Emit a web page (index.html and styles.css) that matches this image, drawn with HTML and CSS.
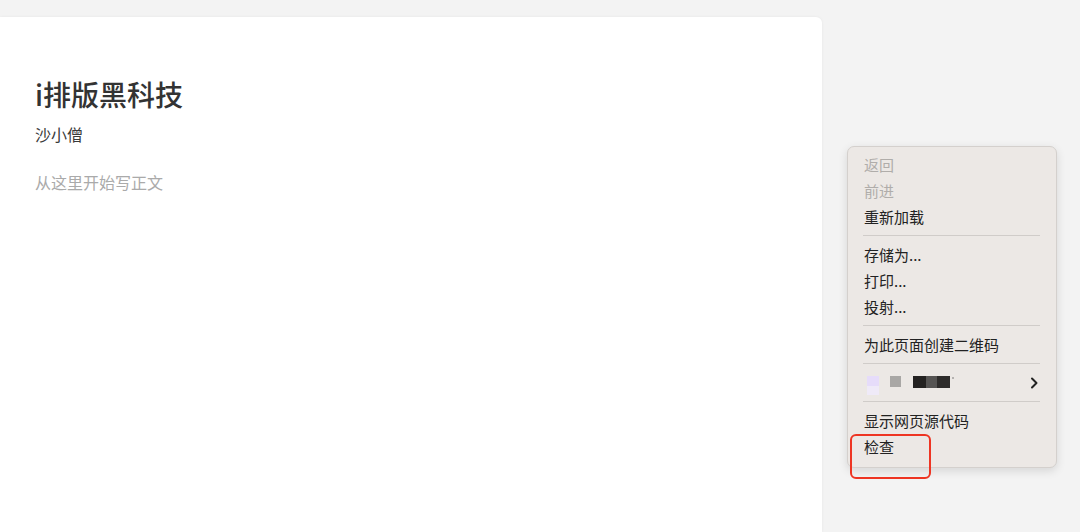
FILE: index.html
```html
<!DOCTYPE html>
<html lang="zh">
<head>
<meta charset="utf-8">
<title>i排版黑科技</title>
<link rel="stylesheet" href="styles.css">
</head>
<body>
<div class="page">
  <main class="card">
    <h1 class="title">i排版黑科技</h1>
    <div class="author">沙小僧</div>
    <div class="placeholder">从这里开始写正文</div>
  </main>
  <aside class="side"></aside>
</div>

<div class="menu">
  <div class="item disabled">返回</div>
  <div class="item disabled">前进</div>
  <div class="item">重新加载</div>
  <div class="sep"></div>
  <div class="item">存储为...</div>
  <div class="item">打印...</div>
  <div class="item">投射...</div>
  <div class="sep"></div>
  <div class="item">为此页面创建二维码</div>
  <div class="sep"></div>
  <div class="item blurred">
    <span class="px px-lav"></span>
    <span class="px px-grey"></span>
    <span class="px-group"><span class="px px-d1"></span><span class="px px-d2"></span><span class="px px-d3"></span></span>
    <span class="dot"></span>
    <span class="chev"><svg width="8" height="12" viewBox="0 0 8 12"><path d="M2 1.5 L6.5 6 L2 10.5" fill="none" stroke="#222" stroke-width="2" stroke-linecap="round" stroke-linejoin="round"/></svg></span>
  </div>
  <div class="sep"></div>
  <div class="item">显示网页源代码</div>
  <div class="item">检查</div>
</div>
<div class="highlight"></div>
</body>
</html>
```
FILE: styles.css
```css
html, body {
  margin: 0;
  padding: 0;
  height: 100%;
  overflow: hidden;
}
body {
  background: #f3f3f3;
  font-family: "Noto Sans CJK SC", "Noto Sans", sans-serif;
  color: #333;
}
.page {
  display: flex;
  height: 100%;
  padding-top: 17px;
  box-sizing: border-box;
}
.card {
  width: 822px;
  flex: none;
  background: #fff;
  border-top-right-radius: 6px;
  box-shadow: 0 0 3px rgba(0,0,0,0.06);
  padding: 58px 35px 0;
  box-sizing: border-box;
}
.side { flex: 1; }
.title {
  margin: 0;
  font-size: 28px;
  font-weight: 500;
  line-height: 38px;
  color: #333;
}
.author {
  margin-top: 9px;
  font-size: 16px;
  line-height: 24px;
  color: #3a3a3a;
}
.placeholder {
  margin-top: 24px;
  font-size: 16px;
  line-height: 24px;
  color: #aaa;
}
.menu {
  position: absolute;
  left: 847px;
  top: 146px;
  width: 210px;
  box-sizing: border-box;
  padding: 5px 0 7px;
  background: #ece8e5;
  border: 1px solid #d4d0cd;
  border-radius: 7px;
  box-shadow: 0 3px 10px rgba(0,0,0,0.12);
}
.item {
  height: 26px;
  line-height: 26px;
  padding-left: 16px;
  font-size: 15px;
  color: #222;
}
.item.disabled { color: #b0adaa; }
.sep {
  height: 1px;
  background: #d0ccc9;
  margin: 5px 16px 6px 15px;
}
.blurred {
  display: flex;
  align-items: center;
  padding-left: 19px;
  padding-right: 18px;
  position: relative;
}
.px { display: inline-block; }
.px-lav {
  width: 12px;
  height: 19px;
  background: linear-gradient(#e6dcfa 0 55%, #efeaf8 55% 100%);
  margin-top: 4px;
}
.px-grey {
  width: 11px;
  height: 11px;
  background: #a9a7a5;
  margin-left: 11px;
  margin-top: -3px;
}
.px-group {
  display: flex;
  margin-left: 12px;
  margin-top: -3px;
}
.px-d1 { width: 13px; height: 12px; background: #242221; }
.px-d2 { width: 11px; height: 12px; background: #565453; }
.px-d3 { width: 13px; height: 12px; background: #2e2c2b; }
.dot {
  width: 2px; height: 2px; background: #b5b2b0;
  margin-left: 2px; margin-top: -10px;
}
.chev {
  margin-left: auto;
  display: flex;
  align-items: center;
}
.highlight {
  position: absolute;
  left: 850px;
  top: 434px;
  width: 81px;
  height: 45px;
  box-sizing: border-box;
  border: 2.5px solid #ee3523;
  border-radius: 6px;
}
```
